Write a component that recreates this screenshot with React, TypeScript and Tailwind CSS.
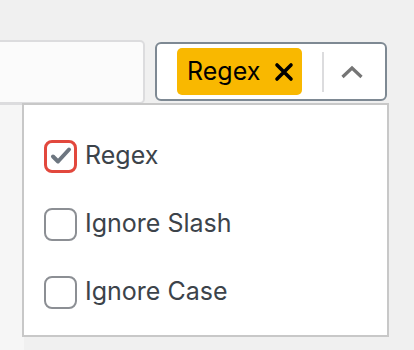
import { useState } from "react";

const Checkbox = ({ checked, focused }: { checked: boolean; focused?: boolean }) => (
  <span
    className={`flex h-[33px] w-[33px] shrink-0 items-center justify-center rounded-[8px] bg-white ${
      focused ? "border-[3px] border-[#e2483d]" : "border-2 border-[#8c8f94]"
    }`}
  >
    {checked && (
      <svg width="22" height="22" viewBox="0 0 22 22">
        <path d="M3 11.5l5 5L19 4.5" fill="none" stroke="#6d7680" strokeWidth="4" strokeLinecap="round" strokeLinejoin="round" />
      </svg>
    )}
  </span>
);

const Option = ({
  label,
  checked,
  focused,
  onToggle,
}: {
  label: string;
  checked: boolean;
  focused?: boolean;
  onToggle: () => void;
}) => (
  <label className="flex h-[68px] cursor-pointer items-center gap-[8px]" onClick={onToggle}>
    <Checkbox checked={checked} focused={focused} />
    <span className="text-[25px] text-[#3c434a]">{label}</span>
  </label>
);

export default function App() {
  const [opts, setOpts] = useState({ regex: true, slash: false, cas: false });

  return (
    <div
      className="relative h-[350px] w-[414px] overflow-hidden bg-[#f0f0f0]"
      style={{ fontFamily: "Inter, 'Noto Sans', sans-serif" }}
    >
      <div className="flex items-start pt-[40px]">
        <div className="ml-[-12px] h-[64px] w-[157px] rounded-[5px] border-2 border-[#dcdcde] bg-[#fbfbfb]" />
        <div className="ml-[10px] mt-[2px] flex h-[59px] w-[232px] items-center rounded-[6px] border-2 border-[#7e8993] bg-white pl-[20px]">
          <span className="flex h-[47px] w-[125px] items-center justify-between rounded-[5px] bg-[#f9b800] pl-[10px] pr-[8px]">
            <span className="text-[25px] text-black">Regex</span>
            <svg width="20" height="20" viewBox="0 0 20 20">
              <path d="M3 3l14 14M17 3L3 17" stroke="#000" strokeWidth="3.6" strokeLinecap="round" />
            </svg>
          </span>
          <span className="ml-[20px] h-[40px] w-[2px] bg-[#dcdcde]" />
          <span className="ml-[16px] flex items-center">
            <svg width="24" height="14" viewBox="0 0 24 14">
              <path d="M2.5 12L12 3l9.5 9" fill="none" stroke="#757575" strokeWidth="3.2" />
            </svg>
          </span>
        </div>
      </div>

      <div className="absolute left-0 top-[103px] h-[250px] w-[24px] border-t-2 border-[#dcdcde] bg-[#f6f6f6]" />

      <div className="absolute left-[22px] top-[103px] flex h-[234px] w-[367px] flex-col border-2 border-[#c8c8c8] bg-white pl-[20px] pt-[17px]">
        <Option label="Regex" checked={opts.regex} focused onToggle={() => setOpts({ ...opts, regex: !opts.regex })} />
        <Option label="Ignore Slash" checked={opts.slash} onToggle={() => setOpts({ ...opts, slash: !opts.slash })} />
        <Option label="Ignore Case" checked={opts.cas} onToggle={() => setOpts({ ...opts, cas: !opts.cas })} />
      </div>
    </div>
  );
}
